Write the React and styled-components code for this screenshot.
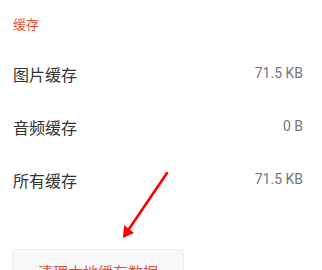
import styled, { createGlobalStyle } from "styled-components"

const Global = createGlobalStyle`
  html, body {
    margin: 0;
    padding: 0;
    background: #fff;
  }
  body {
    font-family: Roboto, "Noto Sans CJK SC", sans-serif;
  }
`

const Page = styled.div`
  position: relative;
  width: 322px;
  height: 270px;
  overflow: hidden;
  background: #fff;
`

const SectionTitle = styled.div`
  height: 47px;
  display: flex;
  align-items: center;
  padding-left: 13px;
  font-size: 13px;
  color: #e8503a;
  font-family: "Noto Sans CJK SC", sans-serif;
`

const Row = styled.div`
  height: 53px;
  display: flex;
  align-items: center;
  justify-content: space-between;
  padding: 0 19px 0 13px;
`

const Label = styled.span`
  font-family: "Noto Sans CJK SC", sans-serif;
  font-size: 16px;
  color: #333;
`

const Value = styled.span`
  font-family: Roboto, sans-serif;
  font-size: 14px;
  color: #757575;
  margin-top: -1px;
`

const ClearButton = styled.button`
  display: flex;
  align-items: center;
  justify-content: center;
  margin: 43px 0 0 12px;
  width: 172px;
  height: 44px;
  background: #f8f8f8;
  border: 1px solid #efefef;
  border-radius: 4px;
  box-shadow: 0 1px 2px rgba(0, 0, 0, 0.05);
  font-family: "Noto Sans CJK SC", sans-serif;
  font-size: 15px;
  color: #e0513e;
  padding: 0;
`

const Arrow = styled.svg`
  position: absolute;
  left: 0;
  top: 0;
  pointer-events: none;
`

const rows = [
  { label: "图片缓存", value: "71.5 KB" },
  { label: "音频缓存", value: "0 B" },
  { label: "所有缓存", value: "71.5 KB" },
]

function App() {
  return (
    <Page>
      <Global />
      <SectionTitle>缓存</SectionTitle>
      {rows.map((r) => (
        <Row key={r.label}>
          <Label>{r.label}</Label>
          <Value>{r.value}</Value>
        </Row>
      ))}
      <ClearButton>清理本地缓存数据</ClearButton>
      <Arrow width="322" height="270" viewBox="0 0 322 270">
        <line x1="167" y1="173" x2="129" y2="229" stroke="#ff0000" strokeWidth="2.6" strokeLinecap="round" />
        <polygon points="123,238 124,225 134,233" fill="#ff0000" />
      </Arrow>
    </Page>
  )
}

export default App
